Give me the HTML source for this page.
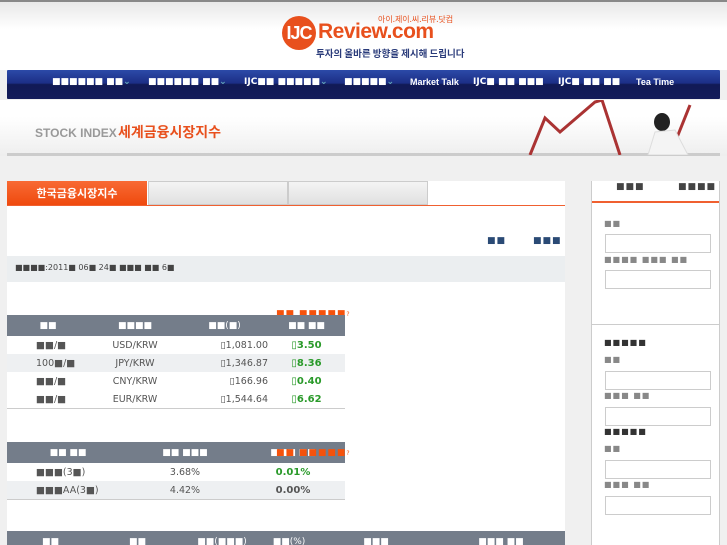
<!DOCTYPE html>
<html style="overflow:hidden;height:545px"><head><meta charset="utf-8"><style>
html,body{overflow:hidden}
body{margin:0;width:727px;height:545px;overflow:hidden;background:#f0f0f0;font-family:"DejaVu Sans","Liberation Sans",sans-serif;position:relative}
.a{position:absolute}
.sq{letter-spacing:1px;font-size:9px}
table{border-collapse:collapse;position:absolute;font-size:9.5px;color:#555}
td{height:18px;text-align:center;padding:0}
th{height:19px;background:#747d8a;color:#fff;font-size:9px;font-weight:normal}
.g{color:#2a9a2a;font-weight:bold;font-size:10px}
.inp{position:absolute;left:605px;width:104px;height:17px;border:1px solid #ccc;background:#fff}
.lab{position:absolute;left:604px;color:#888;font-size:8px;letter-spacing:1px}
</style></head><body>
<div class="a" style="left:0;top:0;width:727px;height:2px;background:#888"></div>
<div class="a" style="left:0;top:2px;width:727px;height:68px;background:linear-gradient(#e8e8e8,#fff 40%,#fff)"></div>
<div class="a" style="left:282px;top:16px;width:34px;height:34px;border-radius:50%;background:#e8501d;color:#fff;font:bold 18px 'Liberation Sans',sans-serif;text-align:center;line-height:34px;letter-spacing:-1px">IJC</div>
<div class="a" style="left:318px;top:20px;font:bold 21px 'Liberation Sans',sans-serif;color:#e8501d;letter-spacing:-0.5px">Review.com</div>
<div class="a" style="left:378px;top:14px;font-size:8px;color:#e8501d;font-family:'Noto Sans CJK KR',sans-serif">아이.제이.씨.리뷰.닷컴</div>
<div class="a" style="left:316px;top:46px;font-size:9.5px;color:#2a3b7a;font-family:'Noto Sans CJK KR',sans-serif;font-weight:bold">투자의 올바른 방향을 제시해 드립니다</div>
<div class="a" style="left:7px;top:70px;width:713px;height:29px;background:linear-gradient(#2c4aa8,#1c2f86 45%,#111a55 50%,#141c5a);border-radius:1px"></div>
<div class="a" style="left:52px;top:77px;color:#fff;font-size:9px;font-weight:bold;white-space:nowrap;word-spacing:0">
<span class="a" style="left:0">■■■■■■ ■■<span style="color:#6ab">⌄</span></span>
<span class="a" style="left:96px">■■■■■■ ■■<span style="color:#6ab">⌄</span></span>
<span class="a" style="left:192px">IJC■■ ■■■■■<span style="color:#6ab">⌄</span></span>
<span class="a" style="left:292px">■■■■■<span style="color:#6ab">⌄</span></span>
<span class="a" style="left:358px;font-family:'Liberation Sans';">Market Talk</span>
<span class="a" style="left:421px">IJC■ ■■ ■■■</span>
<span class="a" style="left:506px">IJC■ ■■ ■■</span>
<span class="a" style="left:584px;font-family:'Liberation Sans'">Tea Time</span></div>
<div class="a" style="left:0;top:100px;width:727px;height:56px;background:linear-gradient(#fff,#fff 30%,#eee)"></div>
<div class="a" style="left:7px;top:153px;width:713px;height:3px;background:#ccc"></div>
<div class="a" style="left:35px;top:126px;font:bold 12px 'Liberation Sans',sans-serif;color:#999">STOCK INDEX</div>
<div class="a" style="left:118px;top:122px;font:bold 14px 'Noto Sans CJK KR',sans-serif;color:#e8501d">세계금융시장지수</div>
<svg class="a" style="left:520px;top:100px" width="200" height="55"><polyline points="10,55 25,18 40,32 75,2 82,0 100,55" fill="none" stroke="#a33" stroke-width="3"/><polyline points="150,55 160,30 170,5" fill="none" stroke="#a33" stroke-width="3"/><ellipse cx="142" cy="22" rx="8" ry="9" fill="#222"/><path d="M128 55 L135 32 L155 30 L168 55Z" fill="#f4f4f4" stroke="#ddd"/></svg>
<div class="a" style="left:7px;top:181px;width:558px;height:364px;background:#fff"></div>
<div class="a" style="left:7px;top:181px;width:140px;height:24px;background:linear-gradient(#f86a34,#ef4a0e);color:#fff;font:bold 11px 'Noto Sans CJK KR',sans-serif;text-align:center;line-height:24px">한국금융시장지수</div>
<div class="a" style="left:148px;top:181px;width:138px;height:22px;border:1px solid #ccc;background:linear-gradient(#f4f4f4,#e0e0e0)"></div>
<div class="a" style="left:288px;top:181px;width:138px;height:22px;border:1px solid #ccc;background:linear-gradient(#f4f4f4,#e0e0e0)"></div>
<div class="a" style="left:7px;top:205px;width:558px;height:1px;background:#f06030"></div>
<div class="a sq" style="left:487px;top:236px;color:#2a4a75">■■</div>
<div class="a sq" style="left:533px;top:236px;color:#2a4a75">■■■</div>
<div class="a" style="left:7px;top:256px;width:558px;height:26px;background:#ebeef0"></div>
<div class="a" style="left:15px;top:263px;font-size:8px;color:#444">■■■■:2011■ 06■ 24■ ■■■ ■■ 6■</div>
<div class="a sq" style="left:276px;top:309px;color:#f5520c">■■ ■■■■■<span style="font-size:6px">?</span></div>
<table style="left:7px;top:315px;width:338px">
<tr><th style="width:80px">■■</th><th style="width:90px">■■■■</th><th style="width:85px">■■(■)</th><th>■■ ■■</th></tr>
<tr><td style="text-align:left;padding-left:29px">■■/■</td><td>USD/KRW</td><td style="text-align:right">▯1,081.00</td><td class="g">▯3.50</td></tr>
<tr style="background:#eef0f2"><td style="text-align:left;padding-left:29px">100■/■</td><td>JPY/KRW</td><td style="text-align:right">▯1,346.87</td><td class="g">▯8.36</td></tr>
<tr><td style="text-align:left;padding-left:29px">■■/■</td><td>CNY/KRW</td><td style="text-align:right">▯166.96</td><td class="g">▯0.40</td></tr>
<tr style="border-bottom:1px solid #ccc"><td style="text-align:left;padding-left:29px">■■/■</td><td>EUR/KRW</td><td style="text-align:right">▯1,544.64</td><td class="g">▯6.62</td></tr>
</table>
<table style="left:7px;top:442px;width:338px">
<tr><th style="width:120px">■■ ■■</th><th style="width:110px">■■ ■■■</th><th>■■■ ■■</th></tr>
<tr><td style="text-align:left;padding-left:29px">■■■(3■)</td><td>3.68%</td><td class="g">0.01%</td></tr>
<tr style="background:#eef0f2;border-bottom:1px solid #ccc"><td style="text-align:left;padding-left:29px">■■■AA(3■)</td><td>4.42%</td><td style="font-weight:bold;font-size:10px">0.00%</td></tr>
</table>
<div class="a sq" style="left:276px;top:448px;color:#f5520c">■■ ■■■■■<span style="font-size:6px">?</span></div>
<table style="left:7px;top:531px;width:558px">
<tr><th style="width:85px">■■</th><th style="width:85px">■■</th><th style="width:80px">■■(■■■)</th><th style="width:50px">■■(%)</th><th style="width:120px">■■■</th><th>■■■ ■■</th></tr></table>
<div class="a" style="left:591px;top:181px;width:127px;height:364px;background:#fff;border-left:1px solid #ccc;border-right:1px solid #ccc"></div>
<div class="a sq" style="left:616px;top:182px;color:#444">■■■</div>
<div class="a sq" style="left:678px;top:182px;color:#444">■■■■</div>
<div class="a" style="left:592px;top:201px;width:127px;height:2px;background:#f06030"></div>
<div class="lab" style="top:219px">■■</div><div class="inp" style="top:234px"></div>
<div class="lab" style="top:255px">■■■■ ■■■ ■■</div><div class="inp" style="top:270px"></div>
<div class="a" style="left:592px;top:324px;width:127px;height:1px;background:#ccc"></div>
<div class="lab" style="top:338px;color:#333">■■■■■</div>
<div class="lab" style="top:355px">■■</div><div class="inp" style="top:371px"></div>
<div class="lab" style="top:391px">■■■ ■■</div><div class="inp" style="top:407px"></div>
<div class="lab" style="top:427px;color:#333">■■■■■</div>
<div class="lab" style="top:444px">■■</div><div class="inp" style="top:460px"></div>
<div class="lab" style="top:480px">■■■ ■■</div><div class="inp" style="top:496px"></div>
</body></html>
